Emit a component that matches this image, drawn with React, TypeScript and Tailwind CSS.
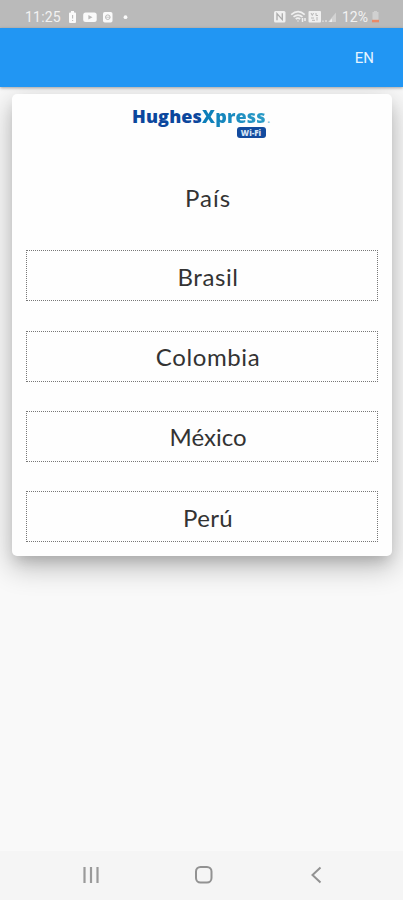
import { useState } from 'react';

const countries = [
  { name: 'Brasil',   tracking: 'tracking-[0.6px]' },
  { name: 'Colombia', tracking: 'tracking-[0.6px]' },
  { name: 'México',   tracking: 'tracking-[0px]' },
  { name: 'Perú',     tracking: 'tracking-[0.3px]' },
];

function StatusBar() {
  return (
    <div className="flex h-7 items-center bg-[#bababa] pt-[5px] pl-[25px] pr-[23px] text-[#f2f2f2] font-['Roboto',sans-serif]">
      <span className="w-[36px] text-[14px] leading-none tracking-[0.2px] whitespace-nowrap">11:25</span>
      {/* Battery, video, app and overflow notifications */}
      <svg className="ml-[7px] h-3 w-[62px] shrink-0" viewBox="0 0 62 12" fill="#fafafa">
        <path d="M3 0h3v1.5h1q1 0 1 1V11q0 1-1 1H2q-1 0-1-1V2.5q0-1 1-1h1z" />
        <path d="M4.6 4v3.5M4.6 9v1" stroke="#bababa" strokeWidth="1.1" />
        <rect x="15.2" y="1.5" width="13.5" height="9.5" rx="2.5" />
        <path d="M20.4 4v4.5L24.5 6.2z" fill="#bababa" />
        <rect x="35" y="1" width="9.5" height="10.5" rx="1.8" />
        <circle cx="39.8" cy="6.2" r="2.3" fill="none" stroke="#bababa" strokeWidth="1" />
        <path d="M37.5 6.2h4.6" stroke="#bababa" strokeWidth=".8" />
        <circle cx="57.5" cy="6.2" r="1.9" />
      </svg>
      {/* NFC, wifi, VoLTE and signal */}
      <svg className="ml-auto h-[13px] w-[65px] shrink-0" viewBox="0 0 65 13" fill="none" stroke="#f0f0f0">
        <rect x="1" y="1" width="11.5" height="11.5" rx="1.5" fill="#f0f0f0" stroke="none" />
        <path d="M4 10.2V3.6l5.3 6V3.2" stroke="#aaa" strokeWidth="1.3" />
        <path d="M18.2 4.6q7-6 13.5 0M20.5 6.9q4.5-3.7 9 0M22.7 9q2.2-1.7 4.5 0" strokeWidth="1.6" />
        <path d="M25 11.5v-1M29.5 8v4M32 8v3" strokeWidth="1.5" />
        <rect x="35.5" y="1" width="12.5" height="11.5" rx="1" fill="#f0f0f0" stroke="none" />
        <path d="M38 3l1.3 2.5L40.5 3M43 3v2.5h2M38 8h3M44 7v3.5M39 10.3h3" stroke="#b0b0b0" strokeWidth=".9" />
        <path d="M50 10.5v1.5M53 10v2" strokeWidth="1" />
        <path d="M55 12l8-9.5V12z" fill="#d2d2d2" stroke="none" />
        <path d="M56 12l3-3.5V12z" fill="#f0f0f0" stroke="none" />
      </svg>
      <span className="ml-[4px] w-[28px] text-[14px] leading-none whitespace-nowrap">12%</span>
      <svg className="ml-px h-[13px] w-[9px] shrink-0" viewBox="0 0 9 13">
        <path d="M3 1h3v1h1.5v9H1.5V2H3z" fill="#d0d0d0" />
        <path d="M1 9.8h7v2.5H1z" fill="#e98a66" />
      </svg>
    </div>
  );
}

function Logo() {
  return (
    <div className="flex flex-col items-center">
      <div className="flex h-[22px] w-[139px] items-center font-['Open_Sans',sans-serif] text-[18px] font-extrabold leading-[26px] tracking-[0.13px] whitespace-nowrap">
        <span className="text-[#0b479d]">Hughes</span>
        <span className="bg-gradient-to-r from-[#087cb8] to-[#2b9cc7] bg-clip-text text-transparent">Xpress</span>
        <span className="mt-2 ml-[2px] text-[8px] leading-none text-[#78bdd8]">.</span>
      </div>
      <span className="ml-[99px] flex h-[11px] w-[29px] items-center justify-center rounded-[3px] bg-[#134b9e] font-['Open_Sans',sans-serif] text-[8px] font-extrabold leading-none text-[#d5e4f5]">
        Wi-Fi
      </span>
    </div>
  );
}

function NavigationBar() {
  return (
    <nav className="flex h-[49px] items-center bg-[#f5f5f5] pb-[2px] pl-[82px] pr-[80px]">
      <button type="button" aria-label="Recents">
        <svg className="block h-[18px] w-[18px]" viewBox="0 0 18 18" stroke="#9a9a9a" strokeWidth="2.2">
          <path d="M2.5 1v16M9 1v16M15.5 1v16" />
        </svg>
      </button>
      <button type="button" aria-label="Home" className="ml-[94px]">
        <svg className="block h-[20px] w-[20px]" viewBox="0 0 20 20" fill="none" stroke="#929292" strokeWidth="2">
          <rect x="2" y="2" width="15.5" height="15.5" rx="4.5" />
        </svg>
      </button>
      <button type="button" aria-label="Back" className="ml-auto">
        <svg className="block h-[18px] w-[14px]" viewBox="0 0 14 18" fill="none" stroke="#929292" strokeWidth="2">
          <path d="M11.5 1.5L3.5 9l8 7.5" />
        </svg>
      </button>
    </nav>
  );
}

export default function App() {
  const [lang, setLang] = useState('EN');

  return (
    <div className="flex h-[900px] w-[403px] flex-col overflow-hidden bg-[#f9f9f9]">
      <StatusBar />
      <header className="relative z-10 flex h-[59px] shrink-0 items-center justify-end bg-[#2196f3] pr-[29px] shadow-[0_1px_3px_rgba(0,0,0,0.35)]">
        <button type="button" onClick={() => setLang(lang === 'EN' ? 'ES' : 'EN')}
          className="pt-px font-['Roboto',sans-serif] text-[15px] leading-5 text-[#e6f4ff]">
          {lang}
        </button>
      </header>

      <main className="flex-1 px-[11.5px] pt-[7px]">
        <section className="h-[462px] rounded-[5px] bg-[#fefefe] px-[14px] pt-[11px] text-center font-['Lato',sans-serif] text-[24px] text-[#333] shadow-[0_10px_28px_2px_rgba(0,0,0,0.24),0_8px_14px_-4px_rgba(0,0,0,0.16)]">
          <Logo />
          <h1 className="mt-[43px] h-[34px] pl-[13px] leading-[34px] tracking-[1px]">País</h1>
          <div className="mt-[35.4px] flex flex-col gap-[29.3px]">
            {countries.map(c => (
              <button key={c.name} type="button"
                className="flex h-[51px] w-full items-center justify-center border border-dotted border-[#777] pt-[2px] pl-[13px]">
                <span className={c.tracking}>{c.name}</span>
              </button>
            ))}
          </div>
        </section>
      </main>

      <NavigationBar />
    </div>
  );
}
